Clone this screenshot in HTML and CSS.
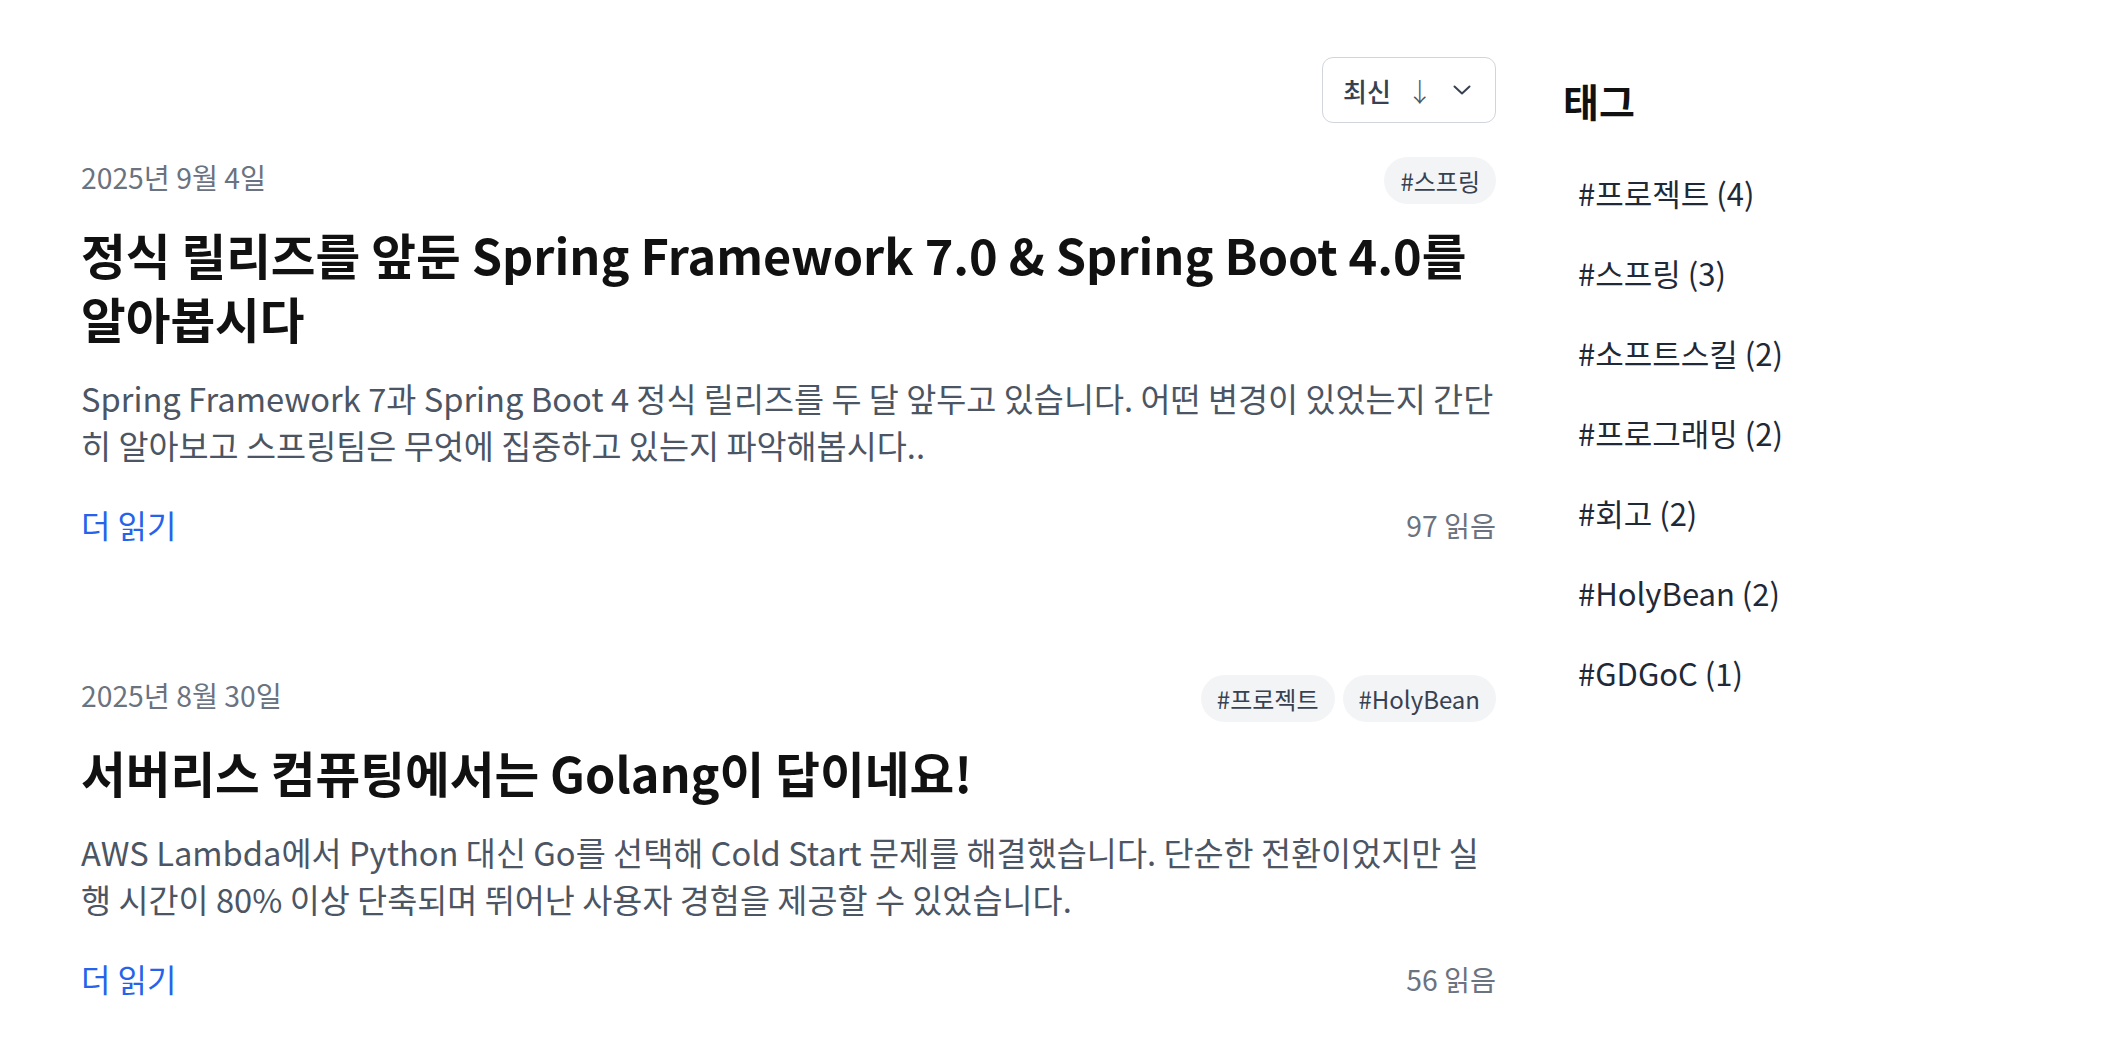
FILE: index.html
```html
<html>
<head>
    <meta charset="utf-8">
    <title>블로그</title>
    <link rel="stylesheet" href="styles.css">
</head>
<body>
    <div class="page">
        <div class="main">
            <div class="toolbar">
                <button class="sort-button">
                    <span class="sort-label">최신</span>
                    <span class="sort-arrow">↓</span>
                    <svg class="chevron" width="18" height="10" viewBox="0 0 18 10">
                        <path d="M1.5 1.5 L9 8.5 L16.5 1.5" fill="none" stroke="#374151" stroke-width="2" stroke-linecap="round" stroke-linejoin="round"/>
                    </svg>
                </button>
            </div>

            <div class="post">
                <div class="post-top">
                    <div class="post-date">2025년 9월 4일</div>
                    <div class="post-tags">
                        <span class="pill">#스프링</span>
                    </div>
                </div>
                <h2 class="post-title">정식 릴리즈를 앞둔 Spring Framework 7.0 &amp; Spring Boot 4.0를 알아봅시다</h2>
                <p class="post-desc">Spring Framework 7과 Spring Boot 4 정식 릴리즈를 두 달 앞두고 있습니다. 어떤 변경이 있었는지 간단히 알아보고 스프링팀은 무엇에 집중하고 있는지 파악해봅시다..</p>
                <div class="post-bottom">
                    <a class="read-more" href="#">더 읽기</a>
                    <span class="read-count">97 읽음</span>
                </div>
            </div>

            <div class="post">
                <div class="post-top">
                    <div class="post-date">2025년 8월 30일</div>
                    <div class="post-tags">
                        <span class="pill">#프로젝트</span>
                        <span class="pill">#HolyBean</span>
                    </div>
                </div>
                <h2 class="post-title">서버리스 컴퓨팅에서는 Golang이 답이네요!</h2>
                <p class="post-desc">AWS Lambda에서 Python 대신 Go를 선택해 Cold Start 문제를 해결했습니다. 단순한 전환이었지만 실행 시간이 80% 이상 단축되며 뛰어난 사용자 경험을 제공할 수 있었습니다.</p>
                <div class="post-bottom">
                    <a class="read-more" href="#">더 읽기</a>
                    <span class="read-count">56 읽음</span>
                </div>
            </div>
        </div>

        <div class="sidebar">
            <div class="sidebar-title">태그</div>
            <ul class="tag-list">
                <li>#프로젝트 (4)</li>
                <li>#스프링 (3)</li>
                <li>#소프트스킬 (2)</li>
                <li>#프로그래밍 (2)</li>
                <li>#회고 (2)</li>
                <li>#HolyBean (2)</li>
                <li>#GDGoC (1)</li>
            </ul>
        </div>
    </div>
</body>
</html>
```

FILE: styles.css
```css
body {
    margin: 0;
    background: #ffffff;
    font-family: "Noto Sans CJK KR", "Noto Sans", sans-serif;
    color: #111827;
}

.page {
    display: flex;
    gap: 67px;
    padding: 57px 81px 0 81px;
}

.main {
    width: 1415px;
    flex-shrink: 0;
}

.toolbar {
    display: flex;
    justify-content: flex-end;
    margin-bottom: 34px;
}

.sort-button {
    display: flex;
    align-items: center;
    height: 66px;
    width: 174px;
    padding: 0 24px 0 20px;
    background: #ffffff;
    border: 1.5px solid #d1d5db;
    border-radius: 11px;
    font-family: inherit;
    font-size: 26px;
    font-weight: 500;
    color: #374151;
}

.sort-arrow {
    margin-left: 16px;
    font-weight: 300;
    color: #4b5563;
}

.chevron {
    margin-left: auto;
}

.post + .post {
    margin-top: 129px;
}

.post-top {
    display: flex;
    justify-content: space-between;
    align-items: flex-start;
    height: 48px;
}

.post-date {
    font-size: 28.3px;
    line-height: 40px;
    color: #6b7280;
}

.post-tags {
    display: flex;
    gap: 8px;
}

.pill {
    display: flex;
    align-items: center;
    height: 47px;
    padding: 0 16px;
    border-radius: 24px;
    background: #f3f4f6;
    font-size: 24px;
    color: #374151;
}

.post-title {
    margin: 17px 0 0 0;
    font-size: 48.6px;
    line-height: 64px;
    font-weight: 700;
    color: #111111;
}

.post-desc {
    margin: 24px 0 0 0;
    font-size: 32.7px;
    line-height: 47px;
    color: #4b5563;
    word-break: break-all;
}

.post-bottom {
    display: flex;
    justify-content: space-between;
    align-items: center;
    margin-top: 34px;
    height: 44px;
}

.read-more {
    font-size: 32px;
    color: #2563eb;
    text-decoration: none;
}

.read-count {
    font-size: 28.3px;
    color: #6b7280;
}

.sidebar {
    flex: 1;
    padding-top: 19px;
}

.sidebar-title {
    font-size: 39px;
    line-height: 48px;
    font-weight: 700;
    color: #111111;
}

.tag-list {
    list-style: none;
    margin: 29px 0 0 0;
    padding: 0;
}

.tag-list li {
    padding: 20px 15px;
    line-height: 40px;
    font-size: 31px;
    color: #1f2937;
}
```
